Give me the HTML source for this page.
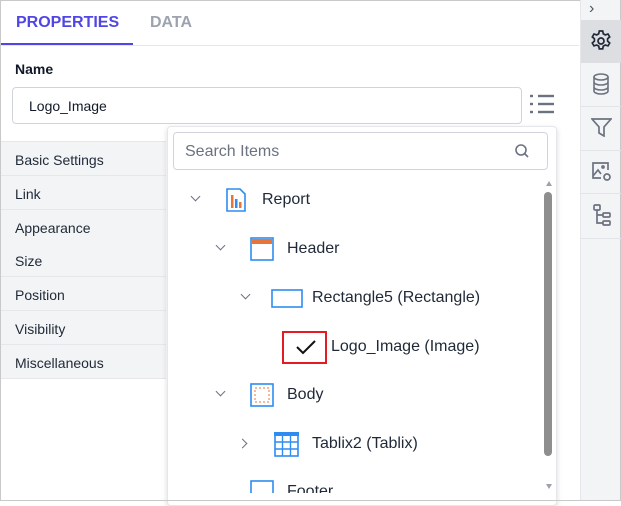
<!DOCTYPE html>
<html><head><style>
*{box-sizing:border-box;margin:0;padding:0}
body{width:621px;height:501px;overflow:hidden;background:#fff;font-family:"Liberation Sans",sans-serif;position:relative;color:#1f2937}
.frame{position:absolute;left:0;top:0;width:621px;height:501px;border:1px solid #c9c9c9}
.abs{position:absolute}
.tab{position:absolute;top:14px;font-size:16px;font-weight:bold}
.row{position:absolute;left:1px;width:165px;height:34px;background:#f3f4f6;border-bottom:1px solid #e5e7eb;font-size:14px;padding:10px 0 0 14px;color:#1f2937}
.side{position:absolute;left:580px;top:0;width:40px;height:500px;background:#f3f4f6;border-left:1px solid #e5e7eb}
.sd{position:absolute;left:0;width:40px;border-top:1px solid #e2e4e8}
.t{position:absolute;font-size:16px;color:#1f2937;white-space:nowrap}
.chev{position:absolute;width:7px;height:7px;border-right:1.6px solid #6b7280;border-bottom:1.6px solid #6b7280}
</style></head><body>
<div class="frame"></div>
<div class="tab" style="left:16px;color:#5046e5">PROPERTIES</div>
<div class="tab" style="left:150px;color:#9ca3af">DATA</div>
<div class="abs" style="left:1px;top:43px;width:132px;height:3px;background:#5046e5"></div>
<div class="abs" style="left:1px;top:45px;width:578px;height:1px;background:#e5e7eb"></div>
<div class="abs" style="left:15px;top:61px;font-size:14px;font-weight:bold;color:#111827">Name</div>
<div class="abs" style="left:12px;top:87px;width:510px;height:37px;border:1px solid #d1d5db;border-radius:4px;font-size:14px;padding:10px 0 0 16px;color:#111827">Logo_Image</div>
<svg class="abs" style="left:528px;top:93px" width="28" height="24"><g stroke="#6b7280" stroke-width="2.4"><line x1="2" y1="3" x2="5" y2="3"/><line x1="10" y1="3" x2="26" y2="3"/><line x1="2" y1="11" x2="5" y2="11"/><line x1="10" y1="11" x2="26" y2="11"/><line x1="2" y1="19" x2="5" y2="19"/><line x1="10" y1="19" x2="26" y2="19"/></g></svg>
<div class="abs" style="left:1px;top:141px;width:165px;height:1px;background:#e5e7eb"></div>
<div class="row" style="top:142px">Basic Settings</div>
<div class="row" style="top:176px">Link</div>
<div class="row" style="top:210px">Appearance</div>
<div class="row" style="top:243px">Size</div>
<div class="row" style="top:277px">Position</div>
<div class="row" style="top:311px">Visibility</div>
<div class="row" style="top:345px">Miscellaneous</div>

<div class="side">
<div class="abs" style="left:8px;top:0px;font-size:16px;color:#4b5563">&#8250;</div>
<div class="abs" style="left:0;top:20px;width:40px;height:43px;background:#dcdee2"></div>
<svg class="abs" style="left:8px;top:29px" width="24" height="24" viewBox="0 0 24 24" fill="none" stroke="#1f2937" stroke-width="1.7"><path d="M10.3 2h3.4l.6 2.8 2 1.1 2.7-.9 1.7 2.9-2.1 1.9v2.3l2.1 1.9-1.7 2.9-2.7-.9-2 1.1-.6 2.8h-3.4l-.6-2.8-2-1.1-2.7.9-1.7-2.9 2.1-1.9V9.8L3.3 7.9 5 5l2.7.9 2-1.1z"/><circle cx="12" cy="12" r="3"/></svg>
<svg class="abs" style="left:11px;top:73px" width="18" height="22" viewBox="0 0 18 22" fill="none" stroke="#6b7280" stroke-width="1.6"><ellipse cx="9" cy="4" rx="7" ry="3"/><path d="M2 4v14c0 1.7 3 3 7 3s7-1.3 7-3V4M2 9c0 1.7 3 3 7 3s7-1.3 7-3M2 14c0 1.7 3 3 7 3s7-1.3 7-3"/></svg>
<div class="sd" style="top:106px"></div>
<svg class="abs" style="left:10px;top:118px" width="21" height="19" viewBox="0 0 21 19" fill="none" stroke="#6b7280" stroke-width="1.7"><path d="M1 1h19l-7 8v9l-5-3V9z"/></svg>
<div class="sd" style="top:150px"></div>
<svg class="abs" style="left:10px;top:161px" width="22" height="22" viewBox="0 0 22 22" fill="none" stroke="#6b7280" stroke-width="1.7"><path d="M10 17H2V2h15v7"/><path d="M2 15l5-6 3 4"/><circle cx="12" cy="6" r="1"/><circle cx="16" cy="16" r="3"/></svg>
<div class="sd" style="top:193px"></div>
<svg class="abs" style="left:12px;top:204px" width="18" height="22" viewBox="0 0 18 22" fill="none" stroke="#6b7280" stroke-width="1.7"><rect x="1" y="1" width="6" height="5" rx="1"/><rect x="10" y="9" width="7" height="4" rx="1"/><rect x="10" y="17" width="7" height="4" rx="1"/><path d="M4 6v13h6M4 11h6"/></svg>
<div class="sd" style="top:238px"></div>
</div>

<div class="abs" style="left:167px;top:126px;width:390px;height:380px;background:#fff;border:1px solid #e5e7eb;border-radius:4px;box-shadow:0 2px 6px rgba(0,0,0,.15)"></div>
<div class="abs" style="left:173px;top:132px;width:375px;height:38px;border:1px solid #d1d5db;border-radius:4px;font-size:16px;color:#6b7280;padding:10px 0 0 11px">Search Items</div>
<svg class="abs" style="left:514px;top:143px" width="16" height="16" fill="none" stroke="#6b7280" stroke-width="1.6"><circle cx="7" cy="7" r="5"/><line x1="10.5" y1="10.5" x2="14" y2="14"/></svg>
<div class="abs" style="left:546px;top:181px;width:0;height:0;border-left:3px solid transparent;border-right:3px solid transparent;border-bottom:5px solid #9ca3af"></div>
<div class="abs" style="left:544px;top:192px;width:8px;height:264px;background:#8e8e8e;border-radius:4px"></div>
<div class="abs" style="left:546px;top:484px;width:0;height:0;border-left:3px solid transparent;border-right:3px solid transparent;border-top:5px solid #9ca3af"></div>

<div class="chev" style="left:192px;top:193px;transform:rotate(45deg)"></div>
<svg class="abs" style="left:226px;top:188px" width="21" height="24" viewBox="0 0 21 24" fill="none"><path d="M1 1h13l5 5v17H1z" stroke="#2f8cf0" stroke-width="1.6"/><rect x="5" y="7" width="2.5" height="13" fill="#e8743b"/><rect x="9" y="11" width="2.5" height="9" fill="#2f8cf0"/><rect x="13" y="14" width="2.5" height="6" fill="#e8743b"/></svg>
<div class="t" style="left:262px;top:191px">Report</div>

<div class="chev" style="left:217px;top:242px;transform:rotate(45deg)"></div>
<svg class="abs" style="left:250px;top:237px" width="24" height="24"><rect x="1" y="1" width="22" height="22" fill="none" stroke="#2f8cf0" stroke-width="1.6"/><rect x="2" y="2" width="20" height="5" fill="#e8743b"/></svg>
<div class="t" style="left:287px;top:240px">Header</div>

<div class="chev" style="left:242px;top:291px;transform:rotate(45deg)"></div>
<svg class="abs" style="left:271px;top:289px" width="32" height="19"><rect x="1" y="1" width="30" height="17" fill="none" stroke="#2f8cf0" stroke-width="1.6"/></svg>
<div class="t" style="left:312px;top:289px">Rectangle5 (Rectangle)</div>

<div class="abs" style="left:282px;top:331px;width:45px;height:33px;border:2px solid #e31b23"></div>
<svg class="abs" style="left:295px;top:339px" width="22" height="16" fill="none" stroke="#111" stroke-width="2"><path d="M2 8l6 6L20 2"/></svg>
<div class="t" style="left:331px;top:338px">Logo_Image (Image)</div>

<div class="chev" style="left:217px;top:388px;transform:rotate(45deg)"></div>
<svg class="abs" style="left:250px;top:383px" width="24" height="24"><rect x="1" y="1" width="22" height="22" fill="none" stroke="#2f8cf0" stroke-width="1.6"/><rect x="5" y="5" width="14" height="14" fill="none" stroke="#e8743b" stroke-width="1" stroke-dasharray="2 2"/></svg>
<div class="t" style="left:287px;top:386px">Body</div>

<div class="chev" style="left:239px;top:440px;transform:rotate(-45deg)"></div>
<svg class="abs" style="left:274px;top:432px" width="25" height="25" viewBox="0 0 25 25"><rect x="0" y="0" width="25" height="4" fill="#2f8cf0"/><rect x="1" y="1" width="23" height="23" fill="none" stroke="#2f8cf0" stroke-width="1.6"/><g stroke="#2f8cf0" stroke-width="1.4"><line x1="1" y1="10" x2="24" y2="10"/><line x1="1" y1="17" x2="24" y2="17"/><line x1="8.5" y1="4" x2="8.5" y2="24"/><line x1="16.5" y1="4" x2="16.5" y2="24"/></g></svg>
<div class="t" style="left:312px;top:435px">Tablix2 (Tablix)</div>

<svg class="abs" style="left:250px;top:480px" width="24" height="20"><rect x="1" y="1" width="22" height="22" fill="none" stroke="#2f8cf0" stroke-width="1.6"/></svg>
<div class="t" style="left:287px;top:483px">Footer</div>
<div class="abs" style="left:168px;top:493px;width:375px;height:8px;background:#fff"></div>
<div class="abs" style="left:0;top:500px;width:621px;height:1px;background:#c9c9c9"></div>
</body></html>
